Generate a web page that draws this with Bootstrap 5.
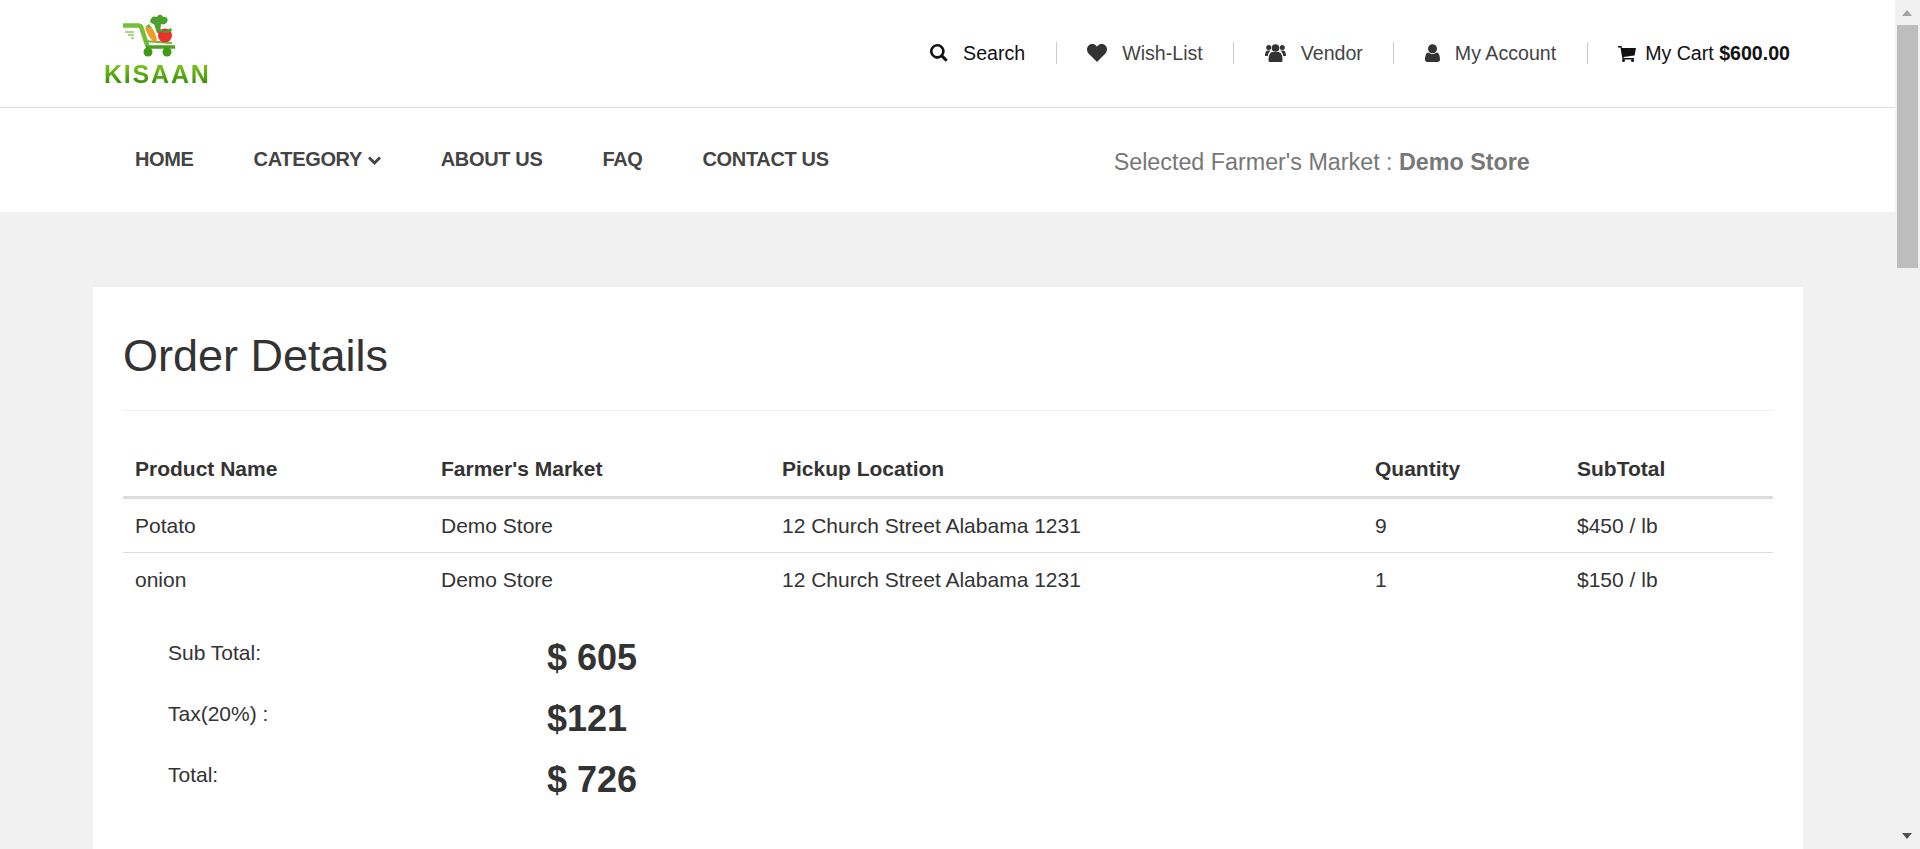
<!DOCTYPE html>
<html lang="en">
<head>
<meta charset="utf-8">
<title>Order Details</title>
<link href="https://cdn.jsdelivr.net/npm/bootstrap@5.3.0/dist/css/bootstrap.min.css" rel="stylesheet">
<style>
html,body{height:849px;overflow:hidden;scrollbar-width:none}
body{background:#f1f1f1;font-family:"Liberation Sans",Arial,sans-serif;color:#333;font-size:21px;width:1895px}
.top-strip{height:108px;background:#fff;border-bottom:1px solid #ddd;padding:0 105px 0 104px}
.logo-box{width:108px;align-self:flex-start;padding-top:10px;text-decoration:none}
.logo-box svg{display:block}
.logo-word{display:block;margin-top:4px;font-size:25px;font-weight:700;line-height:24px;letter-spacing:1.8px;white-space:nowrap;background:linear-gradient(#86c91e,#2f8a06);-webkit-background-clip:text;background-clip:text;color:transparent}
.util-nav{margin-top:-2px}
.util-link{font-size:19.6px;color:#444;text-decoration:none;padding:0 30.5px;border-right:1px solid #ccc;height:22px;line-height:22px;white-space:nowrap}
.util-link:last-child{border-right:0;padding-right:0;color:#111}
.util-link.dark{color:#111}
.util-link svg{margin-right:15px;vertical-align:-2px}
.util-link:last-child svg{margin-right:9px}
.menu-strip{height:104px;background:#fff;padding:0 0 0 135px}
.menu-item{font-size:20px;font-weight:700;color:#444;text-decoration:none;margin-right:60px;letter-spacing:-.35px;white-space:nowrap}
.menu-item svg{margin-left:1px}
.menu-list{margin-top:-2px}
.market-note{font-size:23.3px;color:#777;margin-left:225px;padding-top:4px}
.sheet{background:#fff;margin:75px 0 0 93px;width:1710px;padding:30px;height:600px}
.sheet-title{font-size:45px;font-weight:400;color:#333;margin:0;padding:12px 0 0;border-bottom:1px solid #eee;line-height:53px;height:94px}
.order-table{margin:30px 0 0;width:1650px;table-layout:fixed;font-size:21px;color:#333}
.order-table th,.order-table td{padding:12px;height:55px;vertical-align:middle;color:#333;border-bottom:1px solid #ddd;line-height:25px}
.order-table th{height:56px;border-bottom:3px solid #ddd}
.order-table tbody tr:last-child td{border-bottom:0}
.sum-list{margin-top:20px}
.sum-row{height:61.25px}
.sum-label{width:424px;padding-left:45px;font-size:21px;position:relative;top:-5px}
.sum-value{font-size:36px;font-weight:700;color:#333;line-height:40px}
.fake-scroll{position:fixed;top:0;right:0;width:25px;height:849px;background:#f1f1f1}
.fake-scroll .thumb{position:absolute;left:2px;top:25px;width:21px;height:243px;background:#bdbdbd}
.fake-scroll .up,.fake-scroll .down{position:absolute;left:7px;width:0;height:0;border-left:5.5px solid transparent;border-right:5.5px solid transparent}
.fake-scroll .up{top:10px;border-bottom:6px solid #a3a3a3}
.fake-scroll .down{bottom:10px;border-top:6px solid #505050}
</style>
</head>
<body>
<header class="top-strip d-flex align-items-center justify-content-between">
  <a href="#" class="logo-box d-block">
    <svg width="108" height="48" viewBox="104 10 108 48" xmlns="http://www.w3.org/2000/svg">
      <path d="M123 25.500h15c2 0 3 .8 3.500 2.500l6 18.500" fill="none" stroke="#75bd3a" stroke-width="4.500" stroke-linejoin="round"/>
      <path d="M146 47h29" fill="none" stroke="#4fa022" stroke-width="3.500"/>
      <path d="M144 41l28 2" fill="none" stroke="#6ab632" stroke-width="2"/>
      <path d="M125 32h9M128 35h6M131 38h3" stroke="#8ccb55" stroke-width="1.500"/>
      <circle cx="148" cy="52" r="4.500" fill="#3f9a16"/><circle cx="167" cy="52" r="4.500" fill="#3f9a16"/>
      <path d="M145 28c3-2 7-1 9 3 2 4 3 8 3 11-6 0-10-8-12-14z" fill="#f39a2a"/>
      <path d="M145 27l4-3 3 4z" fill="#6ab632"/>
      <path d="M157 33l-3-9c-3 0-5-3-3-5 1-3 4-3 6-2 1-3 5-3 6 0 3-1 6 2 4 5-1 2-4 3-6 2l-1 9z" fill="#4aa02a"/>
      <circle cx="165" cy="35.500" r="7" fill="#e8322e"/>
      <path d="M160 29l5 2 6-3 1 3-6 2-6-1z" fill="#4f9e2a"/>
    </svg>
    <span class="logo-word">KISAAN</span>
  </a>
  <nav class="util-nav d-flex align-items-center">
    <a href="#" class="util-link dark"><svg width="18" height="18" viewBox="0 0 512 512" fill="#111"><path d="M208 0a208 208 0 1 0 113 383l124 124 60-60-124-124A208 208 0 0 0 208 0zm0 72a136 136 0 1 1 0 272 136 136 0 0 1 0-272z"/></svg>Search</a>
    <a href="#" class="util-link"><svg width="20" height="18" viewBox="0 0 512 460" fill="#333"><path d="M256 460 40 240C-14 182-13 90 42 38c52-50 135-50 186 0l28 28 28-28c51-50 134-50 186 0 55 52 56 144 2 202z"/></svg>Wish-List</a>
    <a href="#" class="util-link"><svg width="21" height="19" viewBox="0 0 21 19" fill="#333"><circle cx="10.500" cy="5" r="3.800"/><circle cx="3.700" cy="4.500" r="2.500"/><circle cx="17.300" cy="4.500" r="2.500"/><path d="M5 19c-1 0-1.500-.7-1.500-1.500 0-5 1.500-8.500 4-8.500h6c2.500 0 4 3.500 4 8.500 0 .8-.5 1.500-1.500 1.500z"/><path d="M0 13c0-3 .8-5.500 3-5.500h2.500C4 9 3 10.500 2.800 13zM21 13c0-3-.8-5.500-3-5.500h-2.500C17 9 18 10.500 18.200 13z"/></svg>Vendor</a>
    <a href="#" class="util-link"><svg width="15" height="18" viewBox="0 0 15 18" fill="#333"><circle cx="7.500" cy="4.700" r="4.500"/><path d="M2.500 18C1 18 0 17 0 15.500 0 12 1 8.500 3.500 8.500c1 .9 2.400 1.500 4 1.500s3-.6 4-1.500c2.500 0 3.500 3.500 3.500 7 0 1.500-1 2.500-2.500 2.500z"/></svg>My Account</a>
    <a href="#" class="util-link"><svg width="18" height="16" viewBox="0 0 18 16" fill="#111"><path d="M0 0h3.500l.5 2h14l-1.500 7.500L5.500 11l.3 1H16v1.500H4.500L2.500 1.500H0z"/><circle cx="5.500" cy="14.500" r="1.500"/><circle cx="14.500" cy="14.500" r="1.500"/></svg>My Cart <b>$600.00</b></a>
  </nav>
</header>
<section class="menu-strip d-flex align-items-center">
  <nav class="menu-list d-flex align-items-center">
    <a href="#" class="menu-item">HOME</a>
    <a href="#" class="menu-item">CATEGORY <svg width="13" height="9" viewBox="0 0 13 9" fill="none" stroke="#444" stroke-width="2.800"><path d="M1 1.500l5.500 5.500L12 1.500"/></svg></a>
    <a href="#" class="menu-item">ABOUT US</a>
    <a href="#" class="menu-item">FAQ</a>
    <a href="#" class="menu-item">CONTACT US</a>
  </nav>
  <div class="market-note">Selected Farmer's Market : <b>Demo Store</b></div>
</section>
<main class="sheet">
  <h1 class="sheet-title">Order Details</h1>
  <table class="table table-borderless order-table">
    <colgroup><col style="width:306px"><col style="width:341px"><col style="width:593px"><col style="width:202px"><col style="width:208px"></colgroup>
    <thead><tr><th>Product Name</th><th>Farmer's Market</th><th>Pickup Location</th><th>Quantity</th><th>SubTotal</th></tr></thead>
    <tbody>
      <tr><td>Potato</td><td>Demo Store</td><td>12 Church Street Alabama 1231</td><td>9</td><td>$450 / lb</td></tr>
      <tr><td>onion</td><td>Demo Store</td><td>12 Church Street Alabama 1231</td><td>1</td><td>$150 / lb</td></tr>
    </tbody>
  </table>
  <div class="sum-list">
    <div class="sum-row d-flex align-items-center"><div class="sum-label">Sub Total:</div><div class="sum-value">$ 605</div></div>
    <div class="sum-row d-flex align-items-center"><div class="sum-label">Tax(20%) :</div><div class="sum-value">$121</div></div>
    <div class="sum-row d-flex align-items-center"><div class="sum-label">Total:</div><div class="sum-value">$ 726</div></div>
  </div>
</main>
<div class="fake-scroll"><span class="up"></span><span class="thumb"></span><span class="down"></span></div>
</body>
</html>
